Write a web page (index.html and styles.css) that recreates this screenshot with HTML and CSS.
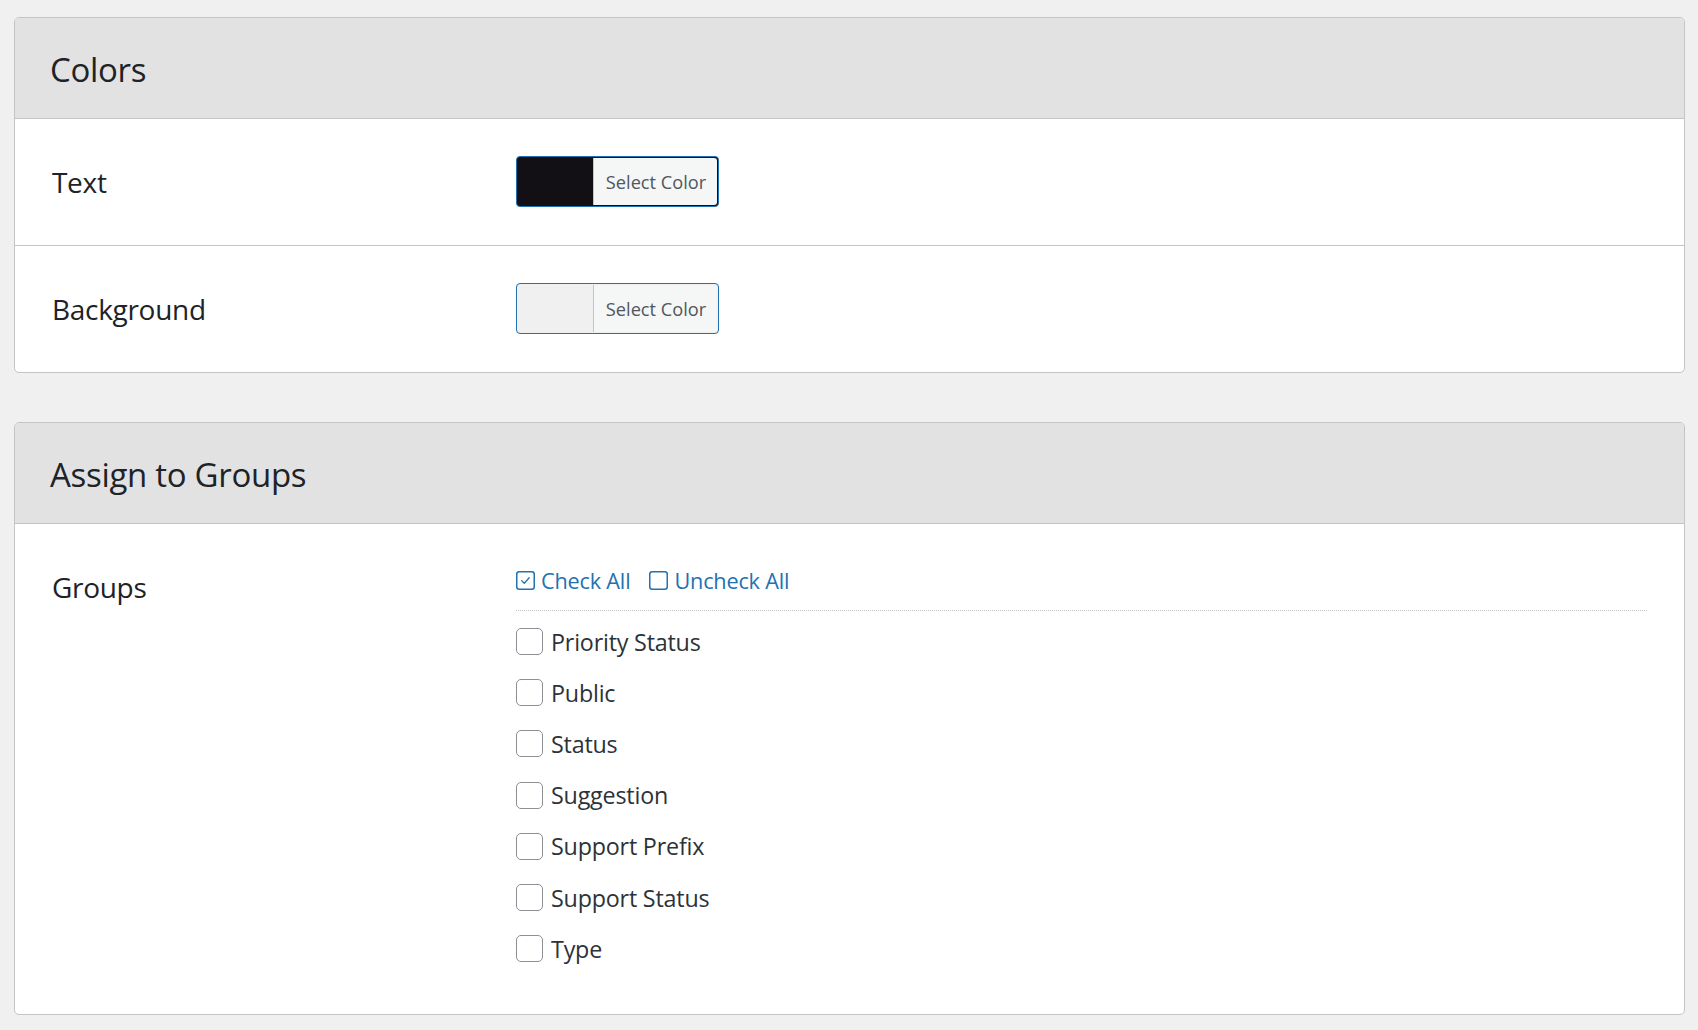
FILE: index.html
```html
<!DOCTYPE html>
<html lang="en">
<head>
<meta charset="utf-8">
<title>Settings</title>
<link rel="stylesheet" href="styles.css">
</head>
<body>
<div class="page">
  <section class="card">
    <h2 class="card-head">Colors</h2>
    <div class="row">
      <div class="label">Text</div>
      <div class="field">
        <button class="color-btn" type="button" style="background-color:#121014">
          <span class="color-text">Select Color</span>
        </button>
      </div>
    </div>
    <div class="row row-sep">
      <div class="label">Background</div>
      <div class="field">
        <button class="color-btn" type="button" style="background-color:#f0f0f1">
          <span class="color-text">Select Color</span>
        </button>
      </div>
    </div>
  </section>

  <section class="card">
    <h2 class="card-head">Assign to Groups</h2>
    <div class="row row-top">
      <div class="label label-top">Groups</div>
      <div class="field">
        <div class="bulk">
          <a class="bulk-link" href="#">
            <svg class="bulk-icon" viewBox="0 0 19 19" width="19" height="19"><rect x="0.75" y="0.75" width="17.5" height="17.5" rx="2.5" fill="none" stroke="#2271b1" stroke-width="1.5"/><path d="M5.6 9.6 L8.3 12.2 L13.2 6.8" fill="none" stroke="#2271b1" stroke-width="1.3" stroke-linecap="round" stroke-linejoin="round"/></svg>
            <span>Check All</span>
          </a>
          <a class="bulk-link" href="#">
            <svg class="bulk-icon" viewBox="0 0 19 19" width="19" height="19"><rect x="0.75" y="0.75" width="17.5" height="17.5" rx="2.5" fill="none" stroke="#2271b1" stroke-width="1.5"/></svg>
            <span>Uncheck All</span>
          </a>
        </div>
        <ul class="checks">
          <li class="check"><span class="box"></span><span>Priority Status</span></li>
          <li class="check"><span class="box"></span><span>Public</span></li>
          <li class="check"><span class="box"></span><span>Status</span></li>
          <li class="check"><span class="box"></span><span>Suggestion</span></li>
          <li class="check"><span class="box"></span><span>Support Prefix</span></li>
          <li class="check"><span class="box"></span><span>Support Status</span></li>
          <li class="check"><span class="box"></span><span>Type</span></li>
        </ul>
      </div>
    </div>
  </section>
</div>
</body>
</html>
```
FILE: styles.css
```css
* { box-sizing: border-box; }

html, body {
  margin: 0;
  padding: 0;
  background: #f0f0f0;
  font-family: "Open Sans", "Noto Sans", sans-serif;
  color: #1d2327;
}

.page {
  padding: 17px 13px 0 14px;
  display: flex;
  flex-direction: column;
  gap: 49px;
}

.card {
  background: #fff;
  border: 1px solid #c3c4c7;
  border-radius: 5px;
  overflow: hidden;
}

.card-head {
  margin: 0;
  height: 101px;
  display: flex;
  align-items: center;
  padding: 2px 0 0 35px;
  background: #e2e2e2;
  border-bottom: 1px solid #c3c4c7;
  font-size: 33px;
  font-weight: 400;
  letter-spacing: -0.3px;
  color: #1d2327;
}

.row {
  display: grid;
  grid-template-columns: 464px 1fr;
  align-items: center;
  padding: 37px 37px 38px 37px;
}

.row-sep {
  border-top: 1px solid #c3c4c7;
}

.row-top {
  align-items: start;
  padding: 41px 37px 40px 37px;
}

.label {
  font-size: 28px;
  color: #1d2327;
  letter-spacing: -0.3px;
}

.label-top {
  padding-top: 3px;
}

.color-btn {
  display: flex;
  align-items: stretch;
  width: 203px;
  height: 51px;
  padding: 1px 1px 1px 76px;
  border: 1px solid #2271b1;
  border-radius: 4px;
  cursor: pointer;
}

.color-text {
  flex: 1;
  display: flex;
  align-items: center;
  justify-content: center;
  background: #f5f6f6;
  border-left: 1px solid #c3c4c7;
  border-radius: 0 3px 3px 0;
  font-family: "Open Sans", "Noto Sans", sans-serif;
  font-size: 18.2px;
  color: #50575e;
  padding-left: 1px;
}

.bulk {
  display: flex;
  gap: 19px;
  align-items: center;
  height: 30px;
}

.bulk-link {
  display: flex;
  align-items: center;
  gap: 6px;
  color: #2271b1;
  text-decoration: none;
  font-size: 21.7px;
  letter-spacing: -0.2px;
}

.bulk-icon {
  flex: none;
}

.checks {
  list-style: none;
  margin: 15px 0 0;
  padding: 5px 0 0;
  border-top: 1px dotted #c3c4c7;
}

.check {
  display: flex;
  align-items: center;
  gap: 8px;
  height: 51.2px;
  font-size: 23.3px;
  color: #2c3338;
  letter-spacing: -0.2px;
}

.box {
  flex: none;
  width: 27px;
  height: 27px;
  border: 1px solid #8c8f94;
  border-radius: 5px;
  background: #fff;
}
```
